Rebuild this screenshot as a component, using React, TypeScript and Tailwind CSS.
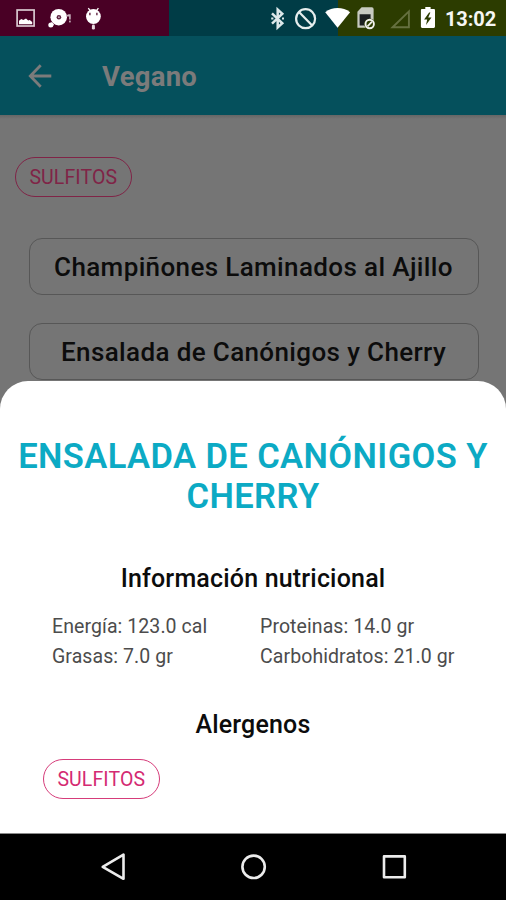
import React from "react";

type ChipProps = {
  label: string;
  className?: string;
};

const AllergenChip = ({ label, className = "" }: ChipProps) => {
  return (
    <span
      className={`inline-flex h-[39.5px] w-[117.5px] items-center justify-center rounded-full border-[1.5px] pt-0.5 text-[19.5px] tracking-[0.1px] ${className}`}
    >
      {label}
    </span>
  );
};

const StatusBar = () => {
  return (
    <div className="flex h-9 bg-[#003c46]">
      <div className="flex w-[169px] items-center bg-[#490025]">
        <svg width="169" height="36" viewBox="0 0 169 36" fill="#fff">
          <rect x="17.1" y="10" width="17" height="16" fill="none" stroke="#d9c8d0" strokeWidth="1.7" />
          <path d="M19 24.3v-3.6l2.3-1.8 2 1 2.7-1.5 2.2 2.2 1.6-.7 2.4 2v2.4z" />
          <circle cx="58.7" cy="17.2" r="8.3" />
          <circle cx="58.9" cy="17.2" r="2.3" fill="#5d2440" />
          <circle cx="58.9" cy="17.2" r="0.9" fill="#c9b4bf" />
          <path d="M51.5 22l2.6 2.8-1.3 1.2h-3z" />
          <circle cx="50.8" cy="25" r="2.5" />
          <path d="M66.5 15.2l2-1h2.2v5.2h-1.6v-3h-2.6z" fill="#c9b4bf" />
          <rect x="69.1" y="20.6" width="1.6" height="1.8" fill="#c9b4bf" />
          <path d="M88.3 8.2l2.2 3M98.4 8.2l-2.2 3" stroke="#fff" strokeWidth="1.3" />
          <circle cx="93.4" cy="16.5" r="7.4" />
          <rect x="91.9" y="24.6" width="3" height="5" rx="1.3" fill="#e6d8df" />
          <path d="M89.9 12.7v2.5M96.9 12.7v2.5" stroke="#490025" strokeWidth="1.2" />
        </svg>
      </div>
      <div className="flex flex-1 bg-[linear-gradient(to_right,#003c46_169px,#2c3c00_169px)]">
        <svg width="275" height="36" viewBox="169 0 275 36" fill="#fff">
          <path
            d="M272 13.3l10.3 10-4.6 4.1V9.6l4.6 4.1-10.3 10"
            fill="none"
            stroke="#dce8ea"
            strokeWidth="2.5"
          />
          <path d="M271.2 18.5h2.2M282 18.5h2" stroke="#dce8ea" strokeWidth="2" />
          <circle cx="305.6" cy="18.7" r="9.5" fill="none" stroke="#e6eeee" strokeWidth="2.2" />
          <path d="M299 12l13.2 13.4" stroke="#e6eeee" strokeWidth="2.2" />
          <path d="M325.2 12.2c7-5.6 17.8-5.6 24.9 0L337.6 27.8z" />
          <path d="M361.6 7.3h10.2a1.8 1.8 0 0 1 1.8 1.8v18.6h-16.2V11.8z" fill="#c8cbc0" />
          <path d="M359.6 14.2h11v6l-4 5.4h-7z" fill="#1c2020" />
          <circle cx="369.7" cy="24" r="5.6" fill="#2c3c00" />
          <circle cx="369.7" cy="24" r="4.2" fill="none" stroke="#f2f2ee" strokeWidth="1.9" />
          <path d="M367.5 26.4l4.5-4.8" stroke="#f2f2ee" strokeWidth="1.7" />
          <path d="M392.6 27.2l16.3-15.8v15.8z" fill="none" stroke="#65703f" strokeWidth="1.9" />
          <path
            fillRule="evenodd"
            d="M425.3 7h5.3v2.1h3.1c.8 0 1.3.5 1.3 1.3v16.2c0 .8-.5 1.3-1.3 1.3h-11.5c-.8 0-1.3-.5-1.3-1.3V10.4c0-.8.5-1.3 1.3-1.3h3.1zm3.8 5.6l-5 6.8h3.1l-1.2 5.7 5.5-7.6h-3.3l2.2-4.9z"
          />
        </svg>
        <div className="pt-[5px] pl-px text-xl leading-7 font-bold tracking-[-0.1px] text-[#f6f7f4]">13:02</div>
      </div>
    </div>
  );
};

const AppBar = () => {
  return (
    <div className="flex h-[79px] items-center bg-[#05505c] pl-7 text-[#7b7b7b]">
      <svg width="24" height="24" viewBox="0 0 24 24" fill="none" stroke="currentColor" strokeWidth="2.8">
        <path d="M12.7 1.3L2.3 12l10.4 10.7M2.3 12h21" />
      </svg>
      <h1 className="pt-[3px] pl-[50px] text-[27.5px] font-bold tracking-[0.25px]">Vegano</h1>
    </div>
  );
};

const DishButton = ({ name }: { name: string }) => {
  return (
    <button className="h-[57px] w-[450px] rounded-[13px] border-[1.5px] border-[#575757] pt-[2px] text-[26px] font-medium tracking-[0.37px] text-[#0c0c0c]">
      {name}
    </button>
  );
};

const DishSheet = () => {
  return (
    <div className="h-[452px] rounded-t-[28px] bg-white pt-[55px] text-center">
      <h2 className="text-[34.5px] leading-10 font-semibold tracking-[0.4px] whitespace-nowrap text-[#0caac4]">
        ENSALADA DE CANÓNIGOS Y<br />
        CHERRY
      </h2>
      <h3 className="mt-[47px] text-[25px] leading-8 font-medium tracking-[0.18px] text-[#0c0c0c]">
        Información nutricional
      </h3>
      <div className="mt-[17px] grid grid-cols-[208px_1fr] pl-[52px] text-left text-[19.5px] leading-[30px] tracking-[0.08px] text-[#4c4c4c]">
        <span>Energía: 123.0 cal</span>
        <span>Proteinas: 14.0 gr</span>
        <span>Grasas: 7.0 gr</span>
        <span>Carbohidratos: 21.0 gr</span>
      </div>
      <h3 className="mt-[37px] text-[25px] leading-8 font-medium tracking-[0.18px] text-[#0c0c0c]">Alergenos</h3>
      <div className="mt-[18px] flex pl-[42.5px]">
        <AllergenChip label="SULFITOS" className="border-[#d63c7a] text-[#d42a72]" />
      </div>
    </div>
  );
};

const NavigationBar = () => {
  return (
    <div className="h-[67px] border-t border-[#8a8a8a] bg-black">
      <svg width="506" height="66" viewBox="0 834 506 66" fill="none" stroke="#ececec" strokeWidth="2.6" strokeLinejoin="round">
        <path d="M102.7 866.8l20.8-12.2v24.2z" />
        <circle cx="253.6" cy="866.8" r="11.2" />
        <rect x="384" y="856.4" width="20.8" height="20.8" />
      </svg>
    </div>
  );
};

const App = () => {
  return (
    <div className="h-[900px] w-[506px] overflow-hidden bg-[#757575] font-[Roboto,sans-serif]">
      <StatusBar />
      <AppBar />
      <div className="h-[266px] bg-[linear-gradient(#666_0px,#757575_4px)] pt-[42px]">
        <div className="flex pl-[14.5px]">
          <AllergenChip label="SULFITOS" className="border-[#802447] text-[#802447]" />
        </div>
        <div className="mt-[41.5px] flex flex-col gap-7 pl-[28.5px]">
          <DishButton name="Champiñones Laminados al Ajillo" />
          <DishButton name="Ensalada de Canónigos y Cherry" />
        </div>
      </div>
      <DishSheet />
      <NavigationBar />
    </div>
  );
};

export default App;
